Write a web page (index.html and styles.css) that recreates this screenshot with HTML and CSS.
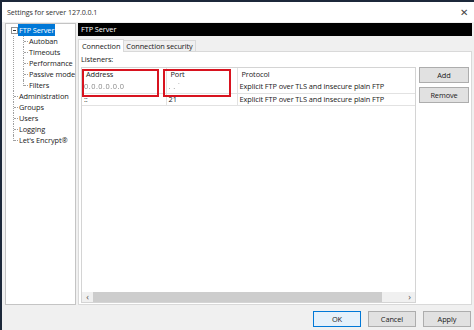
FILE: index.html
```html
<!DOCTYPE html>
<html lang="en">
<head>
    <meta charset="UTF-8">
    <title>Settings for server 127.0.0.1</title>
    <link rel="stylesheet" href="styles.css">
</head>
<body>
    <div class="window">
        <div class="titlebar">
            <span class="title">Settings for server 127.0.0.1</span>
            <span class="close">&#x2715;</span>
        </div>
        <div class="content">
            <div class="tree">
                <div class="root-list">
                    <div class="item open">
                        <span class="toggle"></span>
                        <span class="label selected">FTP Server</span>
                    </div>
                    <div class="children">
                        <div class="child">Autoban</div>
                        <div class="child">Timeouts</div>
                        <div class="child">Performance</div>
                        <div class="child">Passive mode</div>
                        <div class="child">Filters</div>
                    </div>
                    <div class="item"><span class="label">Administration</span></div>
                    <div class="item"><span class="label">Groups</span></div>
                    <div class="item"><span class="label">Users</span></div>
                    <div class="item"><span class="label">Logging</span></div>
                    <div class="item last"><span class="label">Let's Encrypt®</span></div>
                </div>
            </div>
            <div class="main">
                <div class="page-title">FTP Server</div>
                <div class="tabs">
                    <span class="tab active">Connection</span>
                    <span class="tab">Connection security</span>
                </div>
                <div class="tab-page">
                    <div class="section-label">Listeners:</div>
                    <div class="listeners">
                        <div class="list">
                            <table>
                                <tr class="head">
                                    <td class="col-address">Address</td>
                                    <td class="col-port">Port</td>
                                    <td>Protocol</td>
                                </tr>
                                <tr>
                                    <td class="blurred">0.0.0.0.0.0</td>
                                    <td class="blurred">. . &#729;</td>
                                    <td>Explicit FTP over TLS and insecure plain FTP</td>
                                </tr>
                                <tr>
                                    <td>::</td>
                                    <td>21</td>
                                    <td>Explicit FTP over TLS and insecure plain FTP</td>
                                </tr>
                            </table>
                            <div class="hscroll">
                                <span class="arrow">&lsaquo;</span>
                                <span class="thumb"></span>
                                <span class="arrow">&rsaquo;</span>
                            </div>
                            <div class="mark mark-address"></div>
                            <div class="mark mark-port"></div>
                        </div>
                        <div class="side-buttons">
                            <button class="btn">Add</button>
                            <button class="btn">Remove</button>
                        </div>
                    </div>
                </div>
            </div>
        </div>
        <div class="footer">
            <button class="btn default">OK</button>
            <button class="btn">Cancel</button>
            <button class="btn">Apply</button>
        </div>
    </div>
</body>
</html>
```

FILE: styles.css
```css
* {
    margin: 0;
    padding: 0;
    box-sizing: border-box;
    font-family: "Open Sans", "Noto Sans", sans-serif;
}
body {
    width: 474px;
    height: 330px;
    overflow: hidden;
    background: #f0f0f0;
}
.window {
    display: flex;
    flex-direction: column;
    width: 474px;
    height: 330px;
    border-left: 2px solid #1c283a;
    border-top: 2px solid #1c283a;
    background: #f0f0f0;
    color: #1a1a1a;
    font-size: 7.4px;
    letter-spacing: -0.1px;
}
.titlebar {
    display: flex;
    justify-content: space-between;
    align-items: center;
    height: 20px;
    padding: 0 6px 0 5px;
    background: #fff;
}
.title {
    font-size: 7.2px;
    color: #333;
}
.close {
    font-size: 10px;
    color: #444;
}
.content {
    display: flex;
    height: 283px;
    padding: 1px 0 0 3px;
}
/* tree */
.tree {
    width: 71px;
    height: 282px;
    background: #fff;
    border: 1px solid #c4c4c4;
}
.root-list {
    position: relative;
    margin-left: 7px;
}
.item {
    position: relative;
    display: flex;
    align-items: center;
    height: 11px;
    line-height: 11px;
    padding-left: 4px;
    border-left: 1px dotted #a0a0a0;
}
.item::before {
    content: "";
    position: absolute;
    left: 0;
    top: 5px;
    width: 4px;
    border-top: 1px dotted #a0a0a0;
}
.item.open {
    height: 12px;
    border-left-color: transparent;
}
.item.last {
    border-left-color: transparent;
}
.item.last::after {
    content: "";
    position: absolute;
    left: -1px;
    top: 0;
    height: 6px;
    border-left: 1px dotted #a0a0a0;
}
.toggle {
    position: absolute;
    left: -3px;
    top: 3px;
    width: 7px;
    height: 7px;
    border: 1px solid #919191;
    background: #fff;
    z-index: 1;
}
.toggle::after {
    content: "";
    position: absolute;
    left: 1px;
    top: 2px;
    width: 3px;
    border-top: 1px solid #333;
}
.label {
    padding: 0 1px;
    white-space: nowrap;
}
.label.selected {
    background: #0078d7;
    color: #fff;
    line-height: 12px;
}
.children {
    position: relative;
    border-left: 1px dotted #a0a0a0;
}
.child {
    position: relative;
    height: 11px;
    line-height: 11px;
    margin-left: 9px;
    padding-left: 5px;
    white-space: nowrap;
    border-left: 1px dotted #a0a0a0;
}
.child::before {
    content: "";
    position: absolute;
    left: 0;
    top: 5px;
    width: 4px;
    border-top: 1px dotted #a0a0a0;
}
.child:last-child {
    border-left-color: transparent;
}
.child:last-child::after {
    content: "";
    position: absolute;
    left: -1px;
    top: 0;
    height: 6px;
    border-left: 1px dotted #a0a0a0;
}
/* main panel */
.main {
    display: flex;
    flex-direction: column;
    width: 394px;
    margin-left: 2px;
}
.page-title {
    height: 13px;
    line-height: 13px;
    padding-left: 3px;
    background: #000;
    color: #fff;
}
.tabs {
    display: flex;
    align-items: flex-end;
    height: 15px;
}
.tab {
    height: 11px;
    line-height: 10px;
    padding: 0 2px;
    border: 1px solid #d9d9d9;
    border-bottom: none;
    background: #f0f0f0;
    white-space: nowrap;
}
.tab.active {
    position: relative;
    top: 1px;
    height: 13px;
    line-height: 12px;
    padding: 0 3px;
    margin-right: -1px;
    background: #fff;
}
.tab-page {
    flex: 1;
    display: flex;
    flex-direction: column;
    padding: 0 2px 1px 2px;
    background: #fff;
    border: 1px solid #d9d9d9;
}
.section-label {
    height: 15px;
    line-height: 14px;
}
.listeners {
    flex: 1;
    display: flex;
    gap: 3px;
}
.list {
    position: relative;
    display: flex;
    flex-direction: column;
    width: 335px;
    border: 1px solid #d4d4d4;
}
table {
    width: 100%;
    margin-bottom: auto;
    border-collapse: collapse;
}
td {
    height: 12px;
    line-height: 11px;
    padding: 0 2px;
    border: 1px solid #e2e2e2;
    border-top: none;
    white-space: nowrap;
}
td:first-child {
    border-left: none;
}
td:last-child {
    border-right: none;
}
.head td {
    height: 13px;
    padding-left: 4px;
    border-bottom: none;
}
.col-address {
    width: 84px;
}
.col-port {
    width: 71px;
}
.blurred {
    color: #888;
    filter: blur(0.6px);
    letter-spacing: 0.5px;
}
.hscroll {
    display: flex;
    align-items: center;
    height: 10px;
    background: #f0f0f0;
}
.arrow {
    width: 11px;
    text-align: center;
    font-size: 9px;
    line-height: 10px;
    color: #555;
}
.thumb {
    flex: 1;
    height: 10px;
    margin-right: 22px;
    background: #cdcdcd;
}
.mark {
    position: absolute;
    top: 1px;
    height: 28px;
    border: 2px solid #d8131f;
}
.mark-address {
    left: 0;
    width: 77px;
}
.mark-port {
    left: 81px;
    width: 68px;
}
.side-buttons {
    display: flex;
    flex-direction: column;
    gap: 4px;
    width: 50px;
}
.btn {
    height: 16px;
    font-size: 7.4px;
    letter-spacing: -0.1px;
    background: #e1e1e1;
    border: 1px solid #adadad;
    color: #1a1a1a;
}
/* footer */
.footer {
    flex: 1;
    display: flex;
    justify-content: flex-end;
    align-items: flex-start;
    gap: 7px;
    padding: 6px 3px 0 0;
}
.footer .btn {
    width: 48px;
    height: 16px;
}
.btn.default {
    border-color: #0078d7;
    background: #e5f1fb;
}
```
